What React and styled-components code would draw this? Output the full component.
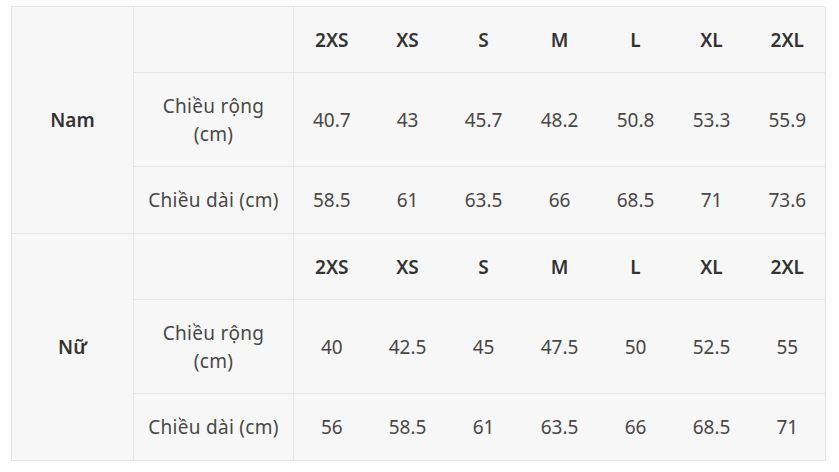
import React from 'react';
import styled, { createGlobalStyle } from 'styled-components';

const GlobalStyle = createGlobalStyle`
  html, body {
    margin: 0;
    padding: 0;
    background: #ffffff;
  }
  body {
    font-family: "Noto Sans", "Open Sans", "DejaVu Sans", sans-serif;
  }
`;

const Page = styled.div`
  padding: 6px 13px 0 11px;
`;

const Table = styled.table`
  width: 815px;
  border-collapse: collapse;
  background: #f7f7f7;
  border: 1px solid #e6e6e6;
  color: #3d3d3d;
  font-size: 19px;
  table-layout: fixed;
`;

const Row = styled.tr`
  height: ${(p) => p.$h}px;
`;

const Cell = styled.td`
  border-top: 1px solid #e6e6e6;
  border-bottom: 1px solid #e6e6e6;
  border-left: ${(p) => (p.$divider ? '1px solid #e6e6e6' : 'none')};
  border-right: ${(p) => (p.$divider ? '1px solid #e6e6e6' : 'none')};
  text-align: center;
  vertical-align: middle;
  padding: 0 4px;
  line-height: 28px;
  letter-spacing: ${(p) => (p.$label ? '0.3px' : '0')};
  font-weight: ${(p) => (p.$bold ? 600 : 400)};
  color: ${(p) => (p.$bold ? '#333333' : '#484848')};
`;

const sizes = ['2XS', 'XS', 'S', 'M', 'L', 'XL', '2XL'];

const groups = [
  {
    name: 'Nam',
    width: ['40.7', '43', '45.7', '48.2', '50.8', '53.3', '55.9'],
    length: ['58.5', '61', '63.5', '66', '68.5', '71', '73.6'],
  },
  {
    name: 'Nữ',
    width: ['40', '42.5', '45', '47.5', '50', '52.5', '55'],
    length: ['56', '58.5', '61', '63.5', '66', '68.5', '71'],
  },
];

const Group = ({ group }) => (
  <>
    <Row $h={66}>
      <Cell rowSpan={3} $bold $divider>{group.name}</Cell>
      <Cell $divider />
      {sizes.map((s) => (
        <Cell key={s} $bold>{s}</Cell>
      ))}
    </Row>
    <Row $h={94}>
      <Cell $divider $label>Chiều rộng<br />(cm)</Cell>
      {group.width.map((v, i) => (
        <Cell key={i}>{v}</Cell>
      ))}
    </Row>
    <Row $h={67}>
      <Cell $divider $label>Chiều dài (cm)</Cell>
      {group.length.map((v, i) => (
        <Cell key={i}>{v}</Cell>
      ))}
    </Row>
  </>
);

const App = () => (
  <>
    <GlobalStyle />
    <Page>
      <Table>
        <colgroup>
          <col style={{ width: 122 }} />
          <col style={{ width: 160 }} />
          {sizes.map((s) => (
            <col key={s} style={{ width: 76 }} />
          ))}
        </colgroup>
        <tbody>
          {groups.map((g) => (
            <Group key={g.name} group={g} />
          ))}
        </tbody>
      </Table>
    </Page>
  </>
);

export default App;
